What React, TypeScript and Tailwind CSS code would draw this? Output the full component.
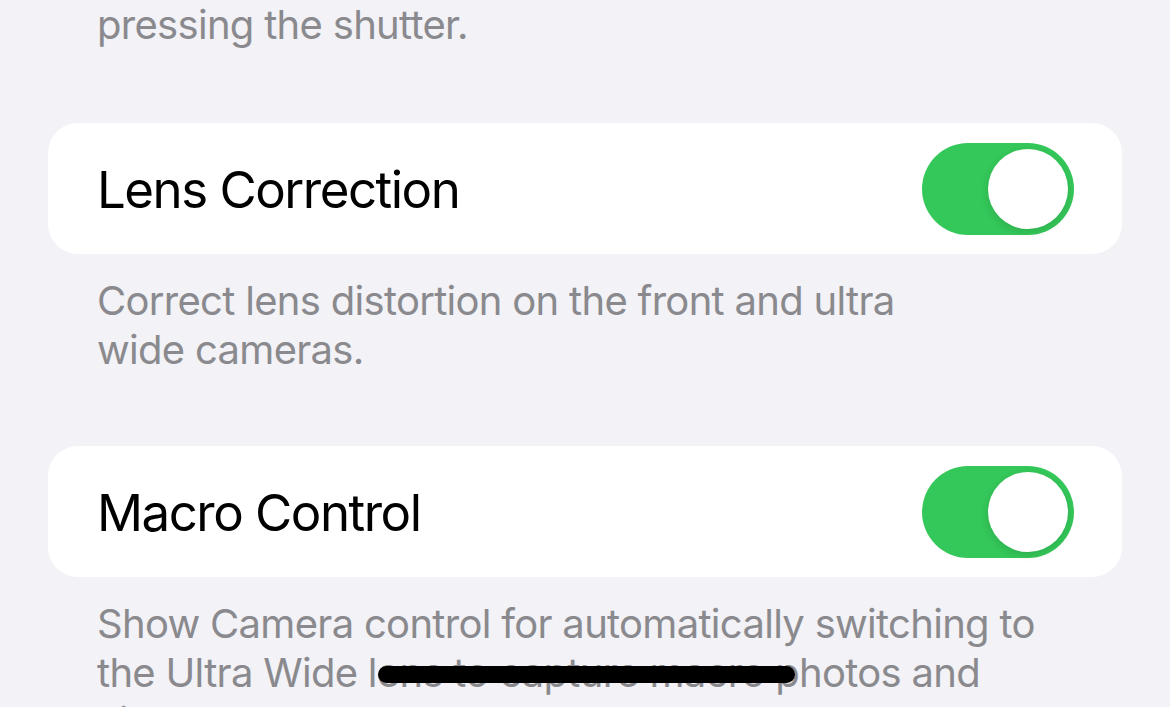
import React from 'react'

type Row = {
  title: string;
  footer: string[];
  on: boolean;
};

const rows: Row[] = [
  {
    title: 'Lens Correction',
    footer: ['Correct lens distortion on the front and ultra', 'wide cameras.'],
    on: true,
  },
  {
    title: 'Macro Control',
    footer: [
      'Show Camera control for automatically switching to',
      'the Ultra Wide lens to capture macro photos and',
      'videos.',
    ],
    on: true,
  },
];

function Toggle({ on }: { on: boolean }) {
  return (
    <div className={on ? 'flex h-[92px] w-[152px] shrink-0 items-center justify-end rounded-full bg-[#34c759] p-[6px]' : 'flex h-[92px] w-[152px] shrink-0 items-center justify-start rounded-full bg-[#e9e9ea] p-[6px]'}>
      <div className="h-[80px] w-[80px] rounded-full bg-white shadow-[0_3px_8px_rgba(0,0,0,0.12)]" />
    </div>
  );
}

export default function App() {
  return (
    <div className="h-[707px] w-[1170px] overflow-hidden bg-[#f2f2f7] px-[48px] font-['Inter','Liberation_Sans',sans-serif]">
      <p className="pl-[49px] text-[40px] leading-[49px] tracking-[-0.7px] text-[#8a8a8e]">
        pressing the shutter.
      </p>

      {rows.map((row, i) => (
        <div key={row.title} className={i === 0 ? 'mt-[74px]' : 'mt-[72px]'}>
          <div className="flex h-[131px] items-center justify-between rounded-[30px] bg-white pl-[49px] pr-[48px]">
            <span className="pt-[3px] text-[51px] tracking-[-1.5px] text-black">{row.title}</span>
            <Toggle on={row.on} />
          </div>
          <div className="relative mt-[22px] pl-[49px] text-[40px] leading-[49px] tracking-[-0.7px] text-[#8a8a8e]">
            {row.footer.map((line) => (
              <p key={line} className="whitespace-nowrap">{line}</p>
            ))}
            {i === 1 && (
              // scribble over part of the second line
              <div className="absolute left-[330px] top-[67px] h-[17px] w-[417px] rounded-full bg-black" />
            )}
          </div>
        </div>
      ))}
    </div>
  );
}
